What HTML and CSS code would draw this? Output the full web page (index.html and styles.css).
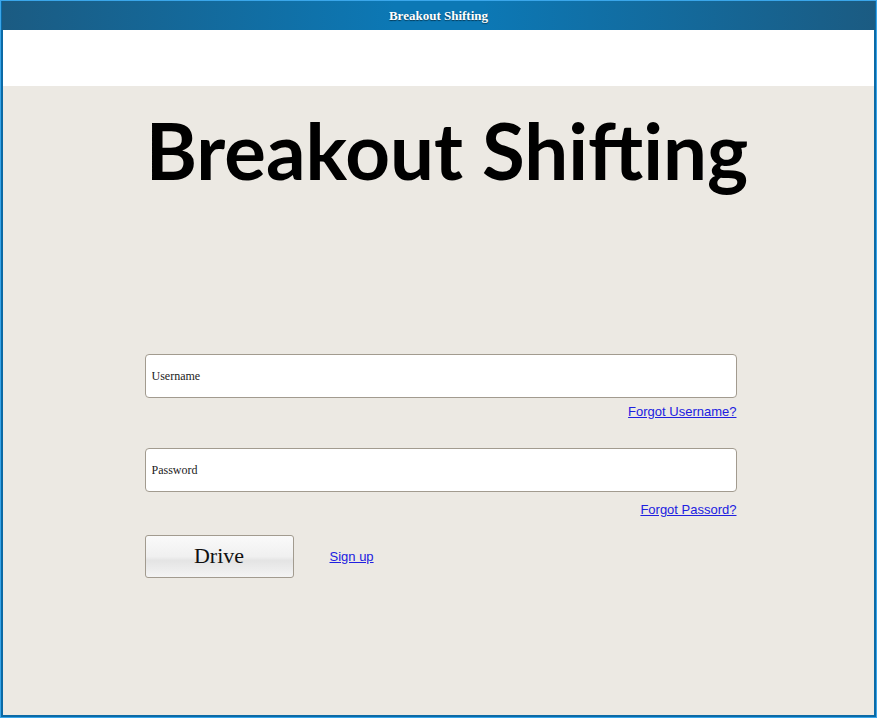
FILE: index.html
```html
<!DOCTYPE html>
<html>
<head>
<meta charset="utf-8">
<link rel="stylesheet" href="styles.css">
</head>
<body>
<div class="window">
  <div class="titlebar">Breakout Shifting</div>
  <div class="toparea"></div>
  <div class="content">
    <h1 class="heading">Breakout Shifting</h1>
    <form class="login">
      <input class="field" type="text" placeholder="Username">
      <div class="forgot-row"><a class="link" href="#">Forgot Username?</a></div>
      <input class="field field-pass" type="password" placeholder="Password">
      <div class="forgot-row"><a class="link" href="#">Forgot Passord?</a></div>
      <div class="actions">
        <button class="drive" type="button">Drive</button>
        <a class="link signup" href="#">Sign up</a>
      </div>
    </form>
  </div>
</div>
</body>
</html>
```
FILE: styles.css
```css
html, body {
  margin: 0;
  padding: 0;
  background: #ffffff;
}
.window {
  width: 877px;
  height: 718px;
  box-sizing: border-box;
  border: 1px solid #3aa6ea;
  box-shadow: inset 0 0 0 2px #0b6aa6, 0 3px 0 0 #c9c9c9;
  display: flex;
  flex-direction: column;
  overflow: hidden;
}
.titlebar {
  height: 29px;
  flex: none;
  background: linear-gradient(to right, #1b5b82 0%, #0c78b5 45%, #0c78b5 55%, #1b5b82 100%);
  color: #ffffff;
  font-family: "Liberation Serif", serif;
  font-weight: bold;
  font-size: 13px;
  text-align: center;
  line-height: 29px;
  text-shadow: 0 1px 1px rgba(0,0,0,0.5);
  margin: 0 1px;
}
.toparea {
  height: 56px;
  flex: none;
  background: #ffffff;
  margin: 0 2px;
}
.content {
  flex: 1;
  background: #ece9e3;
  margin: 0 2px 2px;
  display: flex;
  flex-direction: column;
  align-items: center;
}
.heading {
  margin: 18px 0 0 0;
  font-family: Lato, sans-serif;
  font-weight: bold;
  font-size: 78px;
  line-height: 1.2;
  color: #000;
  padding-left: 17px;
}
.login {
  width: 592px;
  margin-top: 156px;
  margin-left: 4px;
  display: flex;
  flex-direction: column;
}
.field {
  height: 44px;
  box-sizing: border-box;
  border: 1px solid #a29b8f;
  border-radius: 4px;
  background: #fff;
  padding: 2px 6px 0;
  font-family: "Liberation Serif", serif;
  font-size: 12px;
  color: #000;
  outline: none;
}
.field::placeholder {
  color: #222;
}
.forgot-row {
  display: flex;
  justify-content: flex-end;
  height: 20px;
  margin-top: 6px;
}
.forgot-row + .field {
  margin-top: 24px;
}
.field-pass + .forgot-row {
  margin-top: 10px;
}
.link {
  font-family: "Liberation Sans", sans-serif;
  font-size: 13px;
  color: #2020e0;
  text-decoration: underline;
}
.actions {
  display: flex;
  align-items: center;
  margin-top: 13px;
  gap: 36px;
}
.drive {
  width: 149px;
  height: 43px;
  box-sizing: border-box;
  border: 1px solid #a29b8f;
  border-radius: 3px;
  background: linear-gradient(to bottom, #fafafa 0%, #f0f0f0 50%, #e4e4e4 60%, #f4f4f4 100%);
  font-family: "Liberation Serif", serif;
  font-size: 22px;
  color: #111;
  padding: 0;
}
```
